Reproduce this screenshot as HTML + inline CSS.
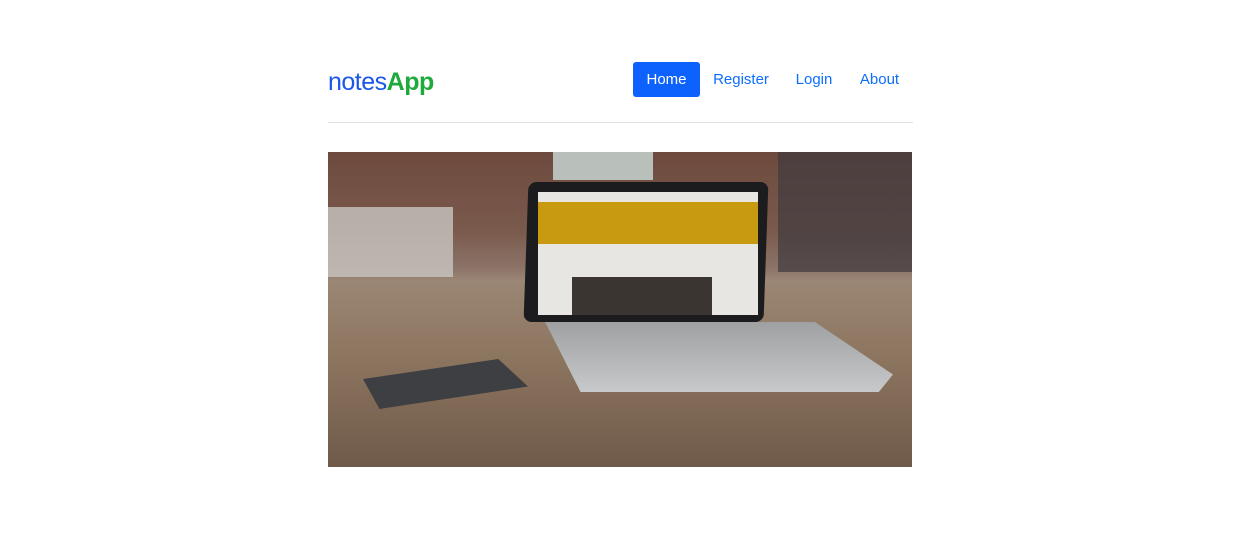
<!DOCTYPE html>
<html><head><style>
body{margin:0;background:#fff;font-family:"Liberation Sans",sans-serif;}
.logo{position:absolute;left:328px;top:68px;font-size:25px;letter-spacing:-0.5px}
.logo .n{color:#1a56e8}.logo .a{color:#1faa3c;font-weight:bold}
.nav a{position:absolute;top:62px;height:35px;line-height:35px;font-size:15px;color:#0d6efd;text-decoration:none;text-align:center}
.hr{position:absolute;left:328px;top:122px;width:585px;height:1px;background:#e2e2e2}
.img{position:absolute;left:328px;top:152px;width:584px;height:315px;overflow:hidden;
background:linear-gradient(180deg,#6e4a3e 0%,#7a5a4d 25%,#8c7468 37%,#a08c7a 42%,#8d7660 55%,#7d6450 75%,#6a5445 100%);}
</style></head><body>
<div class="logo"><span class="n">notes</span><span class="a">App</span></div>
<div class="nav">
<a style="left:633px;width:67px;background:#0d62fd;color:#fff;border-radius:3px">Home</a>
<a style="left:708px;width:66px">Register</a>
<a style="left:789px;width:50px">Login</a>
<a style="left:853px;width:53px">About</a>
</div>
<div class="hr"></div>
<div class="img">
<div style="position:absolute;left:0;top:55px;width:125px;height:70px;background:#c9c6c2;opacity:.8"></div>
<div style="position:absolute;left:225px;top:0;width:100px;height:28px;background:#b9c0bb"></div>
<div style="position:absolute;left:450px;top:0;width:134px;height:120px;background:#3e3a3e;opacity:.7"></div>
<div style="position:absolute;left:0;top:128px;width:584px;height:187px;background:linear-gradient(180deg,#9b8775,#8d7660 40%,#6f5a4a)"></div>
<div style="position:absolute;left:198px;top:30px;width:240px;height:140px;background:#1c1c1e;border-radius:8px;transform:skewX(-2deg)"></div>
<div style="position:absolute;left:210px;top:40px;width:220px;height:123px;background:#e8e6e2"></div>
<div style="position:absolute;left:210px;top:50px;width:220px;height:42px;background:#c89a10"></div>
<div style="position:absolute;left:244px;top:125px;width:140px;height:38px;background:#3a3530"></div>
<div style="position:absolute;left:210px;top:170px;width:355px;height:70px;background:linear-gradient(180deg,#9fa0a2,#c8c9ca);clip-path:polygon(2% 0,78% 0,100% 75%,96% 100%,12% 100%)"></div>
<div style="position:absolute;left:35px;top:207px;width:165px;height:50px;background:#3e3f42;clip-path:polygon(0 40%,82% 0,100% 55%,10% 100%)"></div>
</div>
</body></html>
